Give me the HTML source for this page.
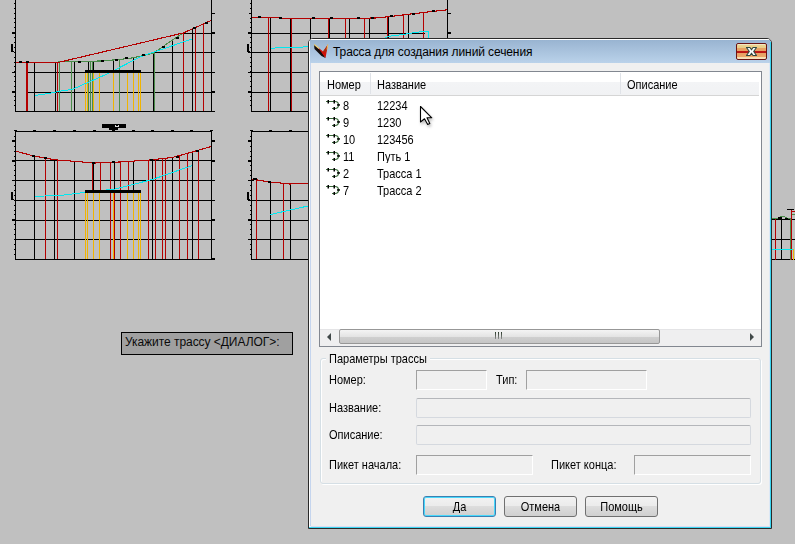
<!DOCTYPE html>
<html><head><meta charset="utf-8">
<style>
html,body{margin:0;padding:0;}
body{width:795px;height:544px;overflow:hidden;background:#c0c0c0;position:relative;font-family:"Liberation Sans",sans-serif;}
.abs{position:absolute;}
svg{position:absolute;left:0;top:0;}
#cmd{left:121px;top:332px;width:170px;height:21px;background:#a0a0a0;border:1px solid #000;}
#cmd span{position:absolute;left:3px;top:2px;font-size:12px;color:#0a0a0a;white-space:nowrap;letter-spacing:-0.05px;}
#dlg{left:308px;top:38px;width:462px;height:489px;border:1px solid #2a2a2a;border-radius:5px 5px 0 0;background:#f0f0f0;overflow:hidden;}
#ttl{position:absolute;left:0;top:0;width:462px;height:24px;background:linear-gradient(#99b4d1,#bad2ea);border-top:1px solid #fff;border-left:1px solid #fff;box-sizing:border-box;}
#ttl .t{position:absolute;left:23px;top:5px;font-size:12px;color:#000;white-space:nowrap;letter-spacing:-0.1px;}
.lbl{position:absolute;font-size:11px;color:#000;white-space:nowrap;transform:scaleY(1.1);transform-origin:0 3px;}
.tb{position:absolute;box-sizing:border-box;background:#f0f0f0;}
.sunk{border-top:1px solid #a0a0a0;border-left:1px solid #a0a0a0;border-right:1px solid #fff;border-bottom:1px solid #fff;}
.flat{border:1px solid #d5d9df;border-top-color:#b4b6ba;border-radius:2px;}
.btn{position:absolute;box-sizing:border-box;height:21px;width:73px;border:1px solid #707070;border-radius:3px;background:linear-gradient(#f2f2f2 0%,#ebebeb 50%,#dddddd 50%,#cfcfcf 100%);font-size:11px;text-align:center;line-height:19px;color:#000;}
.btn span{display:inline-block;transform:scaleY(1.1);transform-origin:0 6px;}
</style></head><body>
<svg width="795" height="544" shape-rendering="crispEdges">
<rect x="26" y="72" width="189" height="1" fill="#000"/>
<rect x="26" y="92" width="186" height="1" fill="#000"/>
<rect x="153" y="52" width="59" height="1" fill="#000"/>
<rect x="182" y="33" width="30" height="1" fill="#000"/>
<rect x="26" y="62" width="2" height="50" fill="#b40000"/>
<rect x="34" y="62" width="1" height="50" fill="#000"/>
<rect x="55" y="62" width="1" height="50" fill="#000"/>
<rect x="57" y="62" width="1" height="50" fill="#b40000"/>
<rect x="59" y="62" width="1" height="50" fill="#4a8c4a"/>
<rect x="71" y="61" width="1" height="51" fill="#4a8c4a"/>
<rect x="74" y="61" width="1" height="51" fill="#000"/>
<rect x="88" y="61" width="1" height="51" fill="#4a8c4a"/>
<rect x="90" y="61" width="1" height="51" fill="#4a8c4a"/>
<rect x="92" y="61" width="1" height="51" fill="#4a8c4a"/>
<rect x="88" y="61" width="1" height="12" fill="#000"/>
<rect x="93" y="61" width="1" height="12" fill="#000"/>
<rect x="113" y="60" width="1" height="13" fill="#000"/>
<rect x="133" y="58" width="1" height="15" fill="#000"/>
<rect x="119" y="60" width="1" height="52" fill="#4a8c4a"/>
<rect x="85" y="73" width="1" height="39" fill="#f0b400"/>
<rect x="87" y="73" width="1" height="39" fill="#f0b400"/>
<rect x="93" y="73" width="1" height="39" fill="#f0b400"/>
<rect x="99" y="73" width="1" height="39" fill="#f0b400"/>
<rect x="113" y="73" width="1" height="39" fill="#f0b400"/>
<rect x="127" y="73" width="1" height="39" fill="#f0b400"/>
<rect x="133" y="73" width="1" height="39" fill="#f0b400"/>
<rect x="138" y="73" width="1" height="39" fill="#f0b400"/>
<rect x="140" y="73" width="1" height="39" fill="#f0b400"/>
<rect x="154" y="53" width="1" height="59" fill="#4a8c4a"/>
<rect x="153" y="52" width="1" height="60" fill="#000"/>
<rect x="172" y="40" width="1" height="72" fill="#000"/>
<rect x="183" y="33" width="1" height="79" fill="#b40000"/>
<rect x="192" y="29" width="1" height="83" fill="#000"/>
<rect x="195" y="28" width="1" height="84" fill="#b40000"/>
<rect x="203" y="24" width="1" height="88" fill="#b40000"/>
<polyline points="58,62 100,61 120,59.5 133,57.8 153,53.3 183,33" fill="none" stroke="#4a8c4a" stroke-width="1.1"/>
<polyline points="15,62.5 58,62.5 183,33 195,27.8 211,20.5" fill="none" stroke="#b40000" stroke-width="1.1"/>
<polyline points="35,95.5 51,93 58,91.5 72,89.5 107,74 141,56.5 192,39" fill="none" stroke="#00e8f0" stroke-width="1.0"/>
<rect x="85" y="70" width="56" height="3" fill="#000"/>
<rect x="15" y="0" width="1" height="112" fill="#000"/>
<rect x="211" y="0" width="1" height="112" fill="#000"/>
<rect x="15" y="111" width="200" height="1" fill="#000"/>
<rect x="14" y="3" width="1" height="1" fill="#000"/>
<rect x="14" y="8" width="1" height="1" fill="#000"/>
<rect x="14" y="13" width="1" height="1" fill="#000"/>
<rect x="14" y="18" width="1" height="1" fill="#000"/>
<rect x="14" y="22" width="1" height="1" fill="#000"/>
<rect x="14" y="27" width="1" height="1" fill="#000"/>
<rect x="14" y="32" width="1" height="1" fill="#000"/>
<rect x="14" y="37" width="1" height="1" fill="#000"/>
<rect x="14" y="42" width="1" height="1" fill="#000"/>
<rect x="14" y="47" width="1" height="1" fill="#000"/>
<rect x="14" y="52" width="1" height="1" fill="#000"/>
<rect x="14" y="57" width="1" height="1" fill="#000"/>
<rect x="14" y="62" width="1" height="1" fill="#000"/>
<rect x="14" y="66" width="1" height="1" fill="#000"/>
<rect x="14" y="71" width="1" height="1" fill="#000"/>
<rect x="14" y="76" width="1" height="1" fill="#000"/>
<rect x="14" y="81" width="1" height="1" fill="#000"/>
<rect x="14" y="86" width="1" height="1" fill="#000"/>
<rect x="14" y="91" width="1" height="1" fill="#000"/>
<rect x="14" y="96" width="1" height="1" fill="#000"/>
<rect x="14" y="100" width="1" height="1" fill="#000"/>
<rect x="14" y="105" width="1" height="1" fill="#000"/>
<rect x="12" y="32" width="3" height="2" fill="#000"/>
<rect x="12" y="91" width="3" height="2" fill="#000"/>
<rect x="12" y="72" width="3" height="1" fill="#000"/>
<rect x="212" y="32" width="3" height="2" fill="#000"/>
<rect x="212" y="91" width="3" height="2" fill="#000"/>
<rect x="212" y="13" width="3" height="1" fill="#000"/>
<rect x="211" y="52" width="4" height="1" fill="#000"/>
<rect x="11" y="44" width="2" height="8" fill="#000"/>
<rect x="11" y="51" width="3" height="1" fill="#000"/>
<rect x="19" y="61" width="3" height="2" fill="#000"/>
<rect x="26" y="61" width="3" height="2" fill="#000"/>
<rect x="78" y="61" width="3" height="2" fill="#000"/>
<rect x="101" y="60" width="3" height="2" fill="#000"/>
<rect x="115" y="59" width="3" height="2" fill="#000"/>
<rect x="125" y="57" width="3" height="2" fill="#000"/>
<rect x="142" y="54" width="3" height="2" fill="#000"/>
<rect x="162" y="46" width="3" height="2" fill="#000"/>
<rect x="176" y="37" width="3" height="2" fill="#000"/>
<rect x="193" y="27" width="3" height="2" fill="#000"/>
<rect x="205" y="22" width="3" height="2" fill="#000"/>
<rect x="102" y="124" width="24" height="4" fill="#000"/>
<rect x="109" y="128" width="9" height="2" fill="#000"/>
<rect x="112" y="130" width="3" height="1" fill="#000"/>
<rect x="115" y="125" width="1" height="2" fill="#d8d8d8"/>
<rect x="118" y="125" width="1" height="2" fill="#d8d8d8"/>
<rect x="116" y="126" width="2" height="1" fill="#d8d8d8"/>
<rect x="12" y="160" width="47" height="1" fill="#000"/>
<rect x="150" y="160" width="62" height="1" fill="#000"/>
<rect x="12" y="180" width="203" height="1" fill="#000"/>
<rect x="15" y="200" width="200" height="1" fill="#000"/>
<rect x="15" y="220" width="197" height="1" fill="#000"/>
<rect x="15" y="239" width="200" height="1" fill="#000"/>
<rect x="34" y="156" width="1" height="104" fill="#000"/>
<rect x="54" y="160" width="1" height="100" fill="#000"/>
<rect x="74" y="161" width="1" height="99" fill="#000"/>
<rect x="152" y="160" width="1" height="100" fill="#000"/>
<rect x="172" y="158" width="1" height="102" fill="#000"/>
<rect x="192" y="152" width="1" height="108" fill="#000"/>
<rect x="93" y="163" width="1" height="29" fill="#000"/>
<rect x="114" y="162" width="1" height="30" fill="#000"/>
<rect x="133" y="161" width="1" height="31" fill="#000"/>
<rect x="45" y="158" width="1" height="102" fill="#b40000"/>
<rect x="57" y="160" width="1" height="100" fill="#b40000"/>
<rect x="110" y="163" width="1" height="97" fill="#b40000"/>
<rect x="120" y="162" width="1" height="98" fill="#b40000"/>
<rect x="148" y="160" width="1" height="100" fill="#b40000"/>
<rect x="155" y="159" width="1" height="101" fill="#b40000"/>
<rect x="162" y="159" width="1" height="101" fill="#b40000"/>
<rect x="165" y="158" width="1" height="102" fill="#b40000"/>
<rect x="179" y="156" width="1" height="104" fill="#b40000"/>
<rect x="187" y="153" width="1" height="107" fill="#b40000"/>
<rect x="198" y="150" width="1" height="110" fill="#b40000"/>
<rect x="100" y="163" width="1" height="29" fill="#b40000"/>
<rect x="128" y="161" width="1" height="31" fill="#b40000"/>
<rect x="92" y="163" width="1" height="29" fill="#b40000"/>
<rect x="85" y="192" width="1" height="68" fill="#f0b400"/>
<rect x="87" y="192" width="1" height="68" fill="#f0b400"/>
<rect x="93" y="192" width="1" height="68" fill="#f0b400"/>
<rect x="99" y="192" width="1" height="68" fill="#f0b400"/>
<rect x="113" y="192" width="1" height="68" fill="#f0b400"/>
<rect x="127" y="192" width="1" height="68" fill="#f0b400"/>
<rect x="133" y="192" width="1" height="68" fill="#f0b400"/>
<rect x="138" y="192" width="1" height="68" fill="#f0b400"/>
<rect x="140" y="192" width="1" height="68" fill="#f0b400"/>
<rect x="114" y="192" width="1" height="68" fill="#b40000"/>
<polyline points="15,151 34,156 54,159.7 74,161.3 94,163 110,162.6 150,160 172,157.5 191,152.4 211,146.5" fill="none" stroke="#b40000" stroke-width="1.1"/>
<polyline points="35,196.5 64,195 85,192.4 115,189 152,179.6 192,165.6" fill="none" stroke="#00e8f0" stroke-width="1.0"/>
<rect x="85" y="190" width="56" height="3" fill="#000"/>
<rect x="15" y="131" width="197" height="1" fill="#000"/>
<rect x="15" y="131" width="1" height="129" fill="#000"/>
<rect x="211" y="131" width="1" height="129" fill="#000"/>
<rect x="15" y="259" width="197" height="1" fill="#000"/>
<rect x="14" y="130" width="3" height="1" fill="#000"/>
<rect x="33" y="130" width="3" height="1" fill="#000"/>
<rect x="53" y="130" width="3" height="1" fill="#000"/>
<rect x="73" y="130" width="3" height="1" fill="#000"/>
<rect x="93" y="130" width="3" height="1" fill="#000"/>
<rect x="112" y="130" width="3" height="1" fill="#000"/>
<rect x="132" y="130" width="3" height="1" fill="#000"/>
<rect x="151" y="130" width="3" height="1" fill="#000"/>
<rect x="171" y="130" width="3" height="1" fill="#000"/>
<rect x="190" y="130" width="3" height="1" fill="#000"/>
<rect x="210" y="130" width="3" height="1" fill="#000"/>
<rect x="14" y="136" width="1" height="1" fill="#000"/>
<rect x="14" y="141" width="1" height="1" fill="#000"/>
<rect x="14" y="146" width="1" height="1" fill="#000"/>
<rect x="14" y="151" width="1" height="1" fill="#000"/>
<rect x="14" y="156" width="1" height="1" fill="#000"/>
<rect x="14" y="161" width="1" height="1" fill="#000"/>
<rect x="14" y="165" width="1" height="1" fill="#000"/>
<rect x="14" y="170" width="1" height="1" fill="#000"/>
<rect x="14" y="175" width="1" height="1" fill="#000"/>
<rect x="14" y="180" width="1" height="1" fill="#000"/>
<rect x="14" y="185" width="1" height="1" fill="#000"/>
<rect x="14" y="190" width="1" height="1" fill="#000"/>
<rect x="14" y="195" width="1" height="1" fill="#000"/>
<rect x="14" y="200" width="1" height="1" fill="#000"/>
<rect x="14" y="205" width="1" height="1" fill="#000"/>
<rect x="14" y="210" width="1" height="1" fill="#000"/>
<rect x="14" y="214" width="1" height="1" fill="#000"/>
<rect x="14" y="219" width="1" height="1" fill="#000"/>
<rect x="14" y="224" width="1" height="1" fill="#000"/>
<rect x="14" y="229" width="1" height="1" fill="#000"/>
<rect x="14" y="234" width="1" height="1" fill="#000"/>
<rect x="14" y="239" width="1" height="1" fill="#000"/>
<rect x="14" y="244" width="1" height="1" fill="#000"/>
<rect x="14" y="249" width="1" height="1" fill="#000"/>
<rect x="14" y="254" width="1" height="1" fill="#000"/>
<rect x="12" y="140" width="3" height="2" fill="#000"/>
<rect x="12" y="160" width="3" height="2" fill="#000"/>
<rect x="12" y="219" width="3" height="2" fill="#000"/>
<rect x="212" y="140" width="3" height="2" fill="#000"/>
<rect x="212" y="160" width="3" height="2" fill="#000"/>
<rect x="212" y="219" width="3" height="2" fill="#000"/>
<rect x="212" y="258" width="3" height="2" fill="#000"/>
<rect x="11" y="192" width="2" height="8" fill="#000"/>
<rect x="11" y="199" width="3" height="1" fill="#000"/>
<rect x="32" y="155" width="3" height="2" fill="#000"/>
<rect x="44" y="157" width="3" height="2" fill="#000"/>
<rect x="92" y="162" width="3" height="2" fill="#000"/>
<rect x="112" y="161" width="3" height="2" fill="#000"/>
<rect x="150" y="159" width="3" height="2" fill="#000"/>
<rect x="176" y="156" width="3" height="2" fill="#000"/>
<rect x="196" y="150" width="3" height="2" fill="#000"/>
<rect x="248" y="33" width="177" height="1" fill="#000"/>
<rect x="248" y="52" width="63" height="1" fill="#000"/>
<rect x="248" y="72" width="63" height="1" fill="#000"/>
<rect x="251" y="92" width="60" height="1" fill="#000"/>
<rect x="268" y="18" width="1" height="94" fill="#b40000"/>
<rect x="291" y="18" width="1" height="94" fill="#b40000"/>
<rect x="328" y="18" width="1" height="21" fill="#b40000"/>
<rect x="345" y="18" width="1" height="21" fill="#b40000"/>
<rect x="364" y="18" width="1" height="21" fill="#b40000"/>
<rect x="387" y="17" width="1" height="22" fill="#b40000"/>
<rect x="403" y="15" width="1" height="24" fill="#b40000"/>
<rect x="423" y="13" width="1" height="26" fill="#b40000"/>
<rect x="270" y="18" width="1" height="94" fill="#000"/>
<rect x="290" y="18" width="1" height="94" fill="#000"/>
<rect x="310" y="18" width="1" height="21" fill="#000"/>
<rect x="329" y="18" width="1" height="21" fill="#000"/>
<rect x="349" y="18" width="1" height="21" fill="#000"/>
<rect x="369" y="18" width="1" height="21" fill="#000"/>
<rect x="388" y="17" width="1" height="22" fill="#000"/>
<rect x="408" y="14" width="1" height="25" fill="#000"/>
<polyline points="251,17.5 280,17.5 281,18.5 336,18.5 375,18 390,16.6 408,14.3 434,11.3 447,9.8" fill="none" stroke="#b40000" stroke-width="1.1"/>
<polyline points="271,48.4 280,47.5 300,47.4 308,46.4" fill="none" stroke="#00e8f0" stroke-width="1.0"/>
<polyline points="385,37.4 390,36.2 403,34.4 419,32 428,31.4 428,38" fill="none" stroke="#00e8f0" stroke-width="1.0"/>
<rect x="251" y="0" width="1" height="112" fill="#000"/>
<rect x="251" y="111" width="58" height="1" fill="#000"/>
<rect x="447" y="0" width="1" height="39" fill="#000"/>
<rect x="250" y="3" width="1" height="1" fill="#000"/>
<rect x="250" y="8" width="1" height="1" fill="#000"/>
<rect x="250" y="13" width="1" height="1" fill="#000"/>
<rect x="250" y="18" width="1" height="1" fill="#000"/>
<rect x="250" y="22" width="1" height="1" fill="#000"/>
<rect x="250" y="27" width="1" height="1" fill="#000"/>
<rect x="250" y="32" width="1" height="1" fill="#000"/>
<rect x="250" y="37" width="1" height="1" fill="#000"/>
<rect x="250" y="42" width="1" height="1" fill="#000"/>
<rect x="250" y="47" width="1" height="1" fill="#000"/>
<rect x="250" y="52" width="1" height="1" fill="#000"/>
<rect x="250" y="57" width="1" height="1" fill="#000"/>
<rect x="250" y="62" width="1" height="1" fill="#000"/>
<rect x="250" y="66" width="1" height="1" fill="#000"/>
<rect x="250" y="71" width="1" height="1" fill="#000"/>
<rect x="250" y="76" width="1" height="1" fill="#000"/>
<rect x="250" y="81" width="1" height="1" fill="#000"/>
<rect x="250" y="86" width="1" height="1" fill="#000"/>
<rect x="250" y="91" width="1" height="1" fill="#000"/>
<rect x="250" y="96" width="1" height="1" fill="#000"/>
<rect x="250" y="100" width="1" height="1" fill="#000"/>
<rect x="250" y="105" width="1" height="1" fill="#000"/>
<rect x="248" y="32" width="3" height="2" fill="#000"/>
<rect x="248" y="91" width="3" height="2" fill="#000"/>
<rect x="249" y="13" width="2" height="1" fill="#000"/>
<rect x="448" y="32" width="3" height="2" fill="#000"/>
<rect x="448" y="13" width="3" height="1" fill="#000"/>
<rect x="247" y="44" width="2" height="8" fill="#000"/>
<rect x="247" y="51" width="3" height="1" fill="#000"/>
<rect x="258" y="16" width="3" height="2" fill="#000"/>
<rect x="279" y="17" width="3" height="2" fill="#000"/>
<rect x="312" y="17" width="3" height="2" fill="#000"/>
<rect x="330" y="17" width="3" height="2" fill="#000"/>
<rect x="357" y="17" width="3" height="2" fill="#000"/>
<rect x="371" y="17" width="3" height="2" fill="#000"/>
<rect x="390" y="15" width="3" height="2" fill="#000"/>
<rect x="412" y="13" width="3" height="2" fill="#000"/>
<rect x="432" y="10" width="3" height="2" fill="#000"/>
<rect x="248" y="200" width="61" height="1" fill="#000"/>
<rect x="251" y="220" width="58" height="1" fill="#000"/>
<rect x="248" y="239" width="61" height="1" fill="#000"/>
<rect x="256" y="180" width="1" height="80" fill="#b40000"/>
<rect x="283" y="183" width="1" height="77" fill="#b40000"/>
<rect x="270" y="182" width="1" height="78" fill="#000"/>
<rect x="290" y="184" width="1" height="76" fill="#000"/>
<polyline points="251,179 270,182 290,184 308,183.4" fill="none" stroke="#b40000" stroke-width="1.1"/>
<polyline points="270,214.6 308,206" fill="none" stroke="#00e8f0" stroke-width="1.0"/>
<rect x="251" y="131" width="58" height="1" fill="#000"/>
<rect x="251" y="131" width="1" height="129" fill="#000"/>
<rect x="251" y="259" width="58" height="1" fill="#000"/>
<rect x="250" y="130" width="3" height="1" fill="#000"/>
<rect x="269" y="130" width="3" height="1" fill="#000"/>
<rect x="289" y="130" width="3" height="1" fill="#000"/>
<rect x="250" y="136" width="1" height="1" fill="#000"/>
<rect x="250" y="141" width="1" height="1" fill="#000"/>
<rect x="250" y="146" width="1" height="1" fill="#000"/>
<rect x="250" y="151" width="1" height="1" fill="#000"/>
<rect x="250" y="156" width="1" height="1" fill="#000"/>
<rect x="250" y="161" width="1" height="1" fill="#000"/>
<rect x="250" y="165" width="1" height="1" fill="#000"/>
<rect x="250" y="170" width="1" height="1" fill="#000"/>
<rect x="250" y="175" width="1" height="1" fill="#000"/>
<rect x="250" y="180" width="1" height="1" fill="#000"/>
<rect x="250" y="185" width="1" height="1" fill="#000"/>
<rect x="250" y="190" width="1" height="1" fill="#000"/>
<rect x="250" y="195" width="1" height="1" fill="#000"/>
<rect x="250" y="200" width="1" height="1" fill="#000"/>
<rect x="250" y="205" width="1" height="1" fill="#000"/>
<rect x="250" y="210" width="1" height="1" fill="#000"/>
<rect x="250" y="214" width="1" height="1" fill="#000"/>
<rect x="250" y="219" width="1" height="1" fill="#000"/>
<rect x="250" y="224" width="1" height="1" fill="#000"/>
<rect x="250" y="229" width="1" height="1" fill="#000"/>
<rect x="250" y="234" width="1" height="1" fill="#000"/>
<rect x="250" y="239" width="1" height="1" fill="#000"/>
<rect x="250" y="244" width="1" height="1" fill="#000"/>
<rect x="250" y="249" width="1" height="1" fill="#000"/>
<rect x="250" y="254" width="1" height="1" fill="#000"/>
<rect x="248" y="140" width="3" height="2" fill="#000"/>
<rect x="248" y="160" width="3" height="2" fill="#000"/>
<rect x="248" y="219" width="3" height="2" fill="#000"/>
<rect x="248" y="180" width="6" height="1" fill="#000"/>
<rect x="247" y="192" width="2" height="8" fill="#000"/>
<rect x="247" y="199" width="3" height="1" fill="#000"/>
<rect x="253" y="178" width="4" height="2" fill="#000"/>
<rect x="268" y="181" width="3" height="2" fill="#000"/>
<rect x="772" y="219" width="24" height="1" fill="#000"/>
<rect x="772" y="239" width="24" height="1" fill="#000"/>
<rect x="772" y="259" width="24" height="1" fill="#000"/>
<rect x="775" y="218" width="1" height="42" fill="#b40000"/>
<rect x="781" y="216" width="1" height="44" fill="#000"/>
<rect x="790" y="218" width="1" height="42" fill="#4a8c4a"/>
<rect x="791" y="210" width="1" height="50" fill="#b40000"/>
<rect x="793" y="249" width="1" height="11" fill="#f0b400"/>
<rect x="772" y="249" width="21" height="1" fill="#00e8f0"/>
<polyline points="772,218 776,219 780,217 783,216 787,218 791,218" fill="none" stroke="#4a8c4a" stroke-width="1.0"/>
<rect x="778" y="217" width="3" height="2" fill="#000"/>
<rect x="785" y="218" width="3" height="1" fill="#000"/>
<rect x="787" y="209" width="7" height="1" fill="#000"/>
<rect x="791" y="211" width="5" height="1" fill="#b40000"/>
<rect x="792" y="214" width="4" height="1" fill="#4a8c4a"/>
</svg>
<div id="cmd" class="abs"><span>Укажите трассу &lt;ДИАЛОГ&gt;:</span></div>
<div id="dlg" class="abs">
  <div id="ttl"><span class="t">Трасса для создания линий сечения</span></div>
</div>
<!-- frame accents -->
<div class="abs" style="left:309px;top:63px;width:1px;height:464px;background:#fff"></div>
<div class="abs" style="left:310px;top:63px;width:1px;height:463px;background:#c5d5ee"></div>
<div class="abs" style="left:770px;top:42px;width:1px;height:486px;background:#3ad6f2"></div>
<div class="abs" style="left:769px;top:63px;width:1px;height:463px;background:#dde8f5"></div>
<div class="abs" style="left:309px;top:527px;width:462px;height:1px;background:#3ad6f2"></div>
<div class="abs" style="left:311px;top:526px;width:459px;height:1px;background:#dcdcf0"></div>
<!-- icon -->
<svg class="abs" style="left:313px;top:43px" width="16" height="16" viewBox="0 0 16 16">
  <polygon points="1,1.5 8.5,8 12.5,15 8.5,13 1.5,6" fill="#140c0c"/>
  <polygon points="4.5,4 10,8.5 15,1.5 12.5,15 8.5,9.5" fill="#d01008"/>
  <polygon points="10,8.5 15,1.5 13,9" fill="#a83010"/>
  <polyline points="1.2,1.5 6,5.5" stroke="#f0d070" stroke-width="1.1" fill="none"/>
  <polyline points="14.8,1.5 14,6.5" stroke="#f0c060" stroke-width="1" fill="none"/>
</svg>
<!-- close button -->
<div class="abs" style="left:736px;top:43px;width:31px;height:17px;box-sizing:border-box;border:1px solid #6a1414;border-radius:2px;background:linear-gradient(#f2e6c4 0px,#f2e6c4 1px,#ecd490 1px,#e8cc88 4px,#e8a464 4px,#e8a062 7px,#be1a16 7px,#b81414 9px,#e8a064 9px,#eca868 13px,#f4dcae 13px,#f6e4c0 15px);"></div>
<svg class="abs" style="left:736px;top:43px" width="31" height="17" viewBox="0 0 31 17">
  <polygon points="10.5,4.5 14,4.5 15.5,6.8 17,4.5 20.5,4.5 17.7,8.5 20.5,12.5 17,12.5 15.5,10.2 14,12.5 10.5,12.5 13.3,8.5" fill="#fbfbfb" stroke="#2e4840" stroke-width="1.1" stroke-linejoin="round"/>
</svg>
<!-- listview -->
<div class="abs" style="left:319px;top:71px;width:441px;height:274px;border:1px solid #828790;background:#fff;overflow:hidden">
  <div class="abs" style="left:0;top:0;width:439px;height:24px;background:linear-gradient(#fff 0,#fff 10px,#f3f4f6 10px,#f1f2f4 23px);border-bottom:1px solid #d5d5d5;box-sizing:border-box;"></div>
  <div class="abs" style="left:50px;top:1px;width:1px;height:21px;background:#e0e3e8"></div>
  <div class="abs" style="left:300px;top:1px;width:1px;height:21px;background:#e0e3e8"></div>
  <span class="lbl" style="left:7px;top:6px">Номер</span>
  <span class="lbl" style="left:57px;top:6px">Название</span>
  <span class="lbl" style="left:307px;top:6px">Описание</span>
  <svg class="abs" style="left:5px;top:27px" width="16" height="11"><path d="M1,2.5 H10 Q13.5,2.5 13.5,6 Q13.5,9.5 10,9.5 H7" fill="none" stroke="#3a6a3a" stroke-width="1.2"/><rect x="2.5" y="1" width="1.5" height="3.5" fill="#000"/><rect x="8.5" y="1" width="1.5" height="3.5" fill="#000"/><rect x="12" y="5.2" width="3" height="1.5" fill="#000"/><rect x="8.5" y="8" width="1.5" height="3.5" fill="#000"/></svg>
<span class="lbl" style="left:23px;top:27px">8</span>
<span class="lbl" style="left:57px;top:27px">12234</span>
<svg class="abs" style="left:5px;top:44px" width="16" height="11"><path d="M1,2.5 H10 Q13.5,2.5 13.5,6 Q13.5,9.5 10,9.5 H7" fill="none" stroke="#3a6a3a" stroke-width="1.2"/><rect x="2.5" y="1" width="1.5" height="3.5" fill="#000"/><rect x="8.5" y="1" width="1.5" height="3.5" fill="#000"/><rect x="12" y="5.2" width="3" height="1.5" fill="#000"/><rect x="8.5" y="8" width="1.5" height="3.5" fill="#000"/></svg>
<span class="lbl" style="left:23px;top:44px">9</span>
<span class="lbl" style="left:57px;top:44px">1230</span>
<svg class="abs" style="left:5px;top:61px" width="16" height="11"><path d="M1,2.5 H10 Q13.5,2.5 13.5,6 Q13.5,9.5 10,9.5 H7" fill="none" stroke="#3a6a3a" stroke-width="1.2"/><rect x="2.5" y="1" width="1.5" height="3.5" fill="#000"/><rect x="8.5" y="1" width="1.5" height="3.5" fill="#000"/><rect x="12" y="5.2" width="3" height="1.5" fill="#000"/><rect x="8.5" y="8" width="1.5" height="3.5" fill="#000"/></svg>
<span class="lbl" style="left:23px;top:61px">10</span>
<span class="lbl" style="left:57px;top:61px">123456</span>
<svg class="abs" style="left:5px;top:78px" width="16" height="11"><path d="M1,2.5 H10 Q13.5,2.5 13.5,6 Q13.5,9.5 10,9.5 H7" fill="none" stroke="#3a6a3a" stroke-width="1.2"/><rect x="2.5" y="1" width="1.5" height="3.5" fill="#000"/><rect x="8.5" y="1" width="1.5" height="3.5" fill="#000"/><rect x="12" y="5.2" width="3" height="1.5" fill="#000"/><rect x="8.5" y="8" width="1.5" height="3.5" fill="#000"/></svg>
<span class="lbl" style="left:23px;top:78px">11</span>
<span class="lbl" style="left:57px;top:78px">Путь 1</span>
<svg class="abs" style="left:5px;top:95px" width="16" height="11"><path d="M1,2.5 H10 Q13.5,2.5 13.5,6 Q13.5,9.5 10,9.5 H7" fill="none" stroke="#3a6a3a" stroke-width="1.2"/><rect x="2.5" y="1" width="1.5" height="3.5" fill="#000"/><rect x="8.5" y="1" width="1.5" height="3.5" fill="#000"/><rect x="12" y="5.2" width="3" height="1.5" fill="#000"/><rect x="8.5" y="8" width="1.5" height="3.5" fill="#000"/></svg>
<span class="lbl" style="left:23px;top:95px">2</span>
<span class="lbl" style="left:57px;top:95px">Трасса 1</span>
<svg class="abs" style="left:5px;top:112px" width="16" height="11"><path d="M1,2.5 H10 Q13.5,2.5 13.5,6 Q13.5,9.5 10,9.5 H7" fill="none" stroke="#3a6a3a" stroke-width="1.2"/><rect x="2.5" y="1" width="1.5" height="3.5" fill="#000"/><rect x="8.5" y="1" width="1.5" height="3.5" fill="#000"/><rect x="12" y="5.2" width="3" height="1.5" fill="#000"/><rect x="8.5" y="8" width="1.5" height="3.5" fill="#000"/></svg>
<span class="lbl" style="left:23px;top:112px">7</span>
<span class="lbl" style="left:57px;top:112px">Трасса 2</span>
  <!-- hscroll -->
  <div class="abs" style="left:0;top:257px;width:441px;height:17px;background:#efeff0;box-shadow:inset 0 1px 0 #e4e4e6"></div>
  <div class="abs" style="left:19px;top:257px;width:321px;height:15px;box-sizing:border-box;border:1px solid #979797;border-radius:2px;background:linear-gradient(#f4f4f4,#e4e4e4 50%,#d0d0d0 50%,#c6c6c6)"></div>
  <div class="abs" style="left:175px;top:260px;width:1px;height:7px;background:linear-gradient(#2a3a2a,#909090)"></div>
  <div class="abs" style="left:178px;top:260px;width:1px;height:7px;background:linear-gradient(#2a3a2a,#909090)"></div>
  <div class="abs" style="left:181px;top:260px;width:1px;height:7px;background:linear-gradient(#2a3a2a,#909090)"></div>
  <svg class="abs" style="left:7px;top:261px" width="5" height="9"><polygon points="4,0 4,8 0,4" fill="#404848"/></svg>
  <svg class="abs" style="left:430px;top:261px" width="5" height="9"><polygon points="0,0 0,8 4,4" fill="#404848"/></svg>
</div>
<!-- groupbox -->
<div class="abs" style="left:320px;top:358px;width:439px;height:124px;border:1px solid #d5dfe5;border-radius:3px;box-shadow:inset 1px 1px 0 #fff, 1px 1px 0 #fff;"></div>
<div class="abs" style="left:326px;top:352px;width:104px;height:12px;background:#f0f0f0"></div>
<span class="lbl" style="left:329px;top:352px;color:#000">Параметры трассы</span>
<span class="lbl" style="left:329px;top:373px">Номер:</span>
<div class="tb sunk" style="left:416px;top:370px;width:71px;height:20px"></div>
<span class="lbl" style="left:496px;top:373px">Тип:</span>
<div class="tb sunk" style="left:526px;top:370px;width:121px;height:20px"></div>
<span class="lbl" style="left:329px;top:401px">Название:</span>
<div class="tb flat" style="left:416px;top:398px;width:335px;height:20px"></div>
<span class="lbl" style="left:329px;top:428px">Описание:</span>
<div class="tb flat" style="left:416px;top:425px;width:335px;height:20px"></div>
<span class="lbl" style="left:329px;top:458px">Пикет начала:</span>
<div class="tb sunk" style="left:416px;top:455px;width:117px;height:20px"></div>
<span class="lbl" style="left:551px;top:458px">Пикет конца:</span>
<div class="tb sunk" style="left:634px;top:455px;width:117px;height:20px"></div>
<!-- buttons -->
<div class="btn" style="left:423px;top:496px;border-color:#3c7fb1;box-shadow:inset 0 0 0 1px #48d8fb;"><span>Да</span></div>
<div class="btn" style="left:504px;top:496px;"><span>Отмена</span></div>
<div class="btn" style="left:585px;top:496px;"><span>Помощь</span></div>
<!-- cursor -->
<svg class="abs" style="left:419px;top:105px;filter:drop-shadow(1.5px 2px 1.5px rgba(0,0,0,0.28))" width="18" height="24"><path d="M1.5,1.5 L1.5,17 L5.5,13.8 L8.7,19.5 L10.8,18.5 L8,12.8 L12.8,12.8 Z" fill="#fff" stroke="#000" stroke-width="1.1" stroke-linejoin="round"/></svg>
</body></html>
